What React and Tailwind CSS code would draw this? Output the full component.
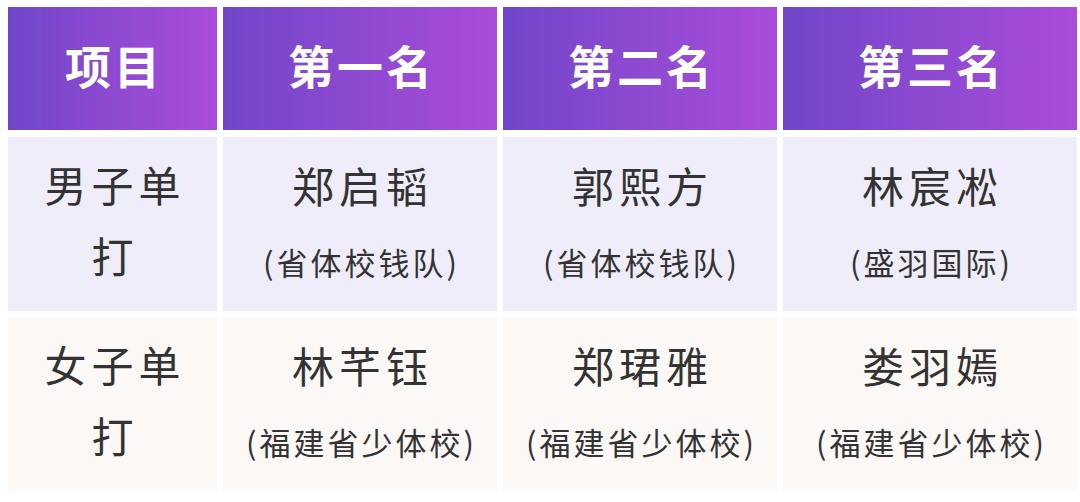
import React from "react";

const font = { fontFamily: '"Noto Sans CJK SC", "Noto Sans", sans-serif' };

const headers = ["项目", "第一名", "第二名", "第三名"];
const rows = [
  {
    event: ["男子单", "打"],
    bg: "bg-[#efedf9]",
    cells: [
      ["郑启韬", "(省体校钱队)"],
      ["郭熙方", "(省体校钱队)"],
      ["林宸凇", "(盛羽国际)"],
    ],
  },
  {
    event: ["女子单", "打"],
    bg: "bg-[#fcf8f6]",
    cells: [
      ["林芊钰", "(福建省少体校)"],
      ["郑珺雅", "(福建省少体校)"],
      ["娄羽嫣", "(福建省少体校)"],
    ],
  },
];

export default function App() {
  return (
    <div className="w-[1080px] h-[502px] bg-white pl-[8px] pt-[7px]" style={font}>
      <div className="grid grid-cols-[209px_274px_274px_294px] grid-rows-[123px_174px_172px] gap-x-[6px] gap-y-[7px]">
        {headers.map((h) => (
          <div
            key={h}
            className="flex items-center justify-center pb-[10px] bg-gradient-to-r from-[#7046c8] to-[#ab4bda] text-white font-bold text-[46px] tracking-[3px] leading-none"
          >
            <span className="pl-[3px]">{h}</span>
          </div>
        ))}
        {rows.map((r, i) => (
          <React.Fragment key={i}>
            <div className={`flex flex-col items-center justify-center pb-[10px] ${r.bg} text-[#333333] text-[42px] tracking-[5px] leading-[71px]`}>
              <span className="pl-[5px]">{r.event[0]}</span>
              <span className="pl-[5px]">{r.event[1]}</span>
            </div>
            {r.cells.map(([name, org], j) => (
              <div key={j} className={`flex flex-col items-center justify-center pb-[8px] ${r.bg} text-[#333333]`}>
                <span className="text-[42px] tracking-[5px] leading-none pl-[5px] mb-[40px]">{name}</span>
                <span className="text-[31px] tracking-[3px] leading-none pl-[3px]">{org}</span>
              </div>
            ))}
          </React.Fragment>
        ))}
      </div>
    </div>
  );
}
